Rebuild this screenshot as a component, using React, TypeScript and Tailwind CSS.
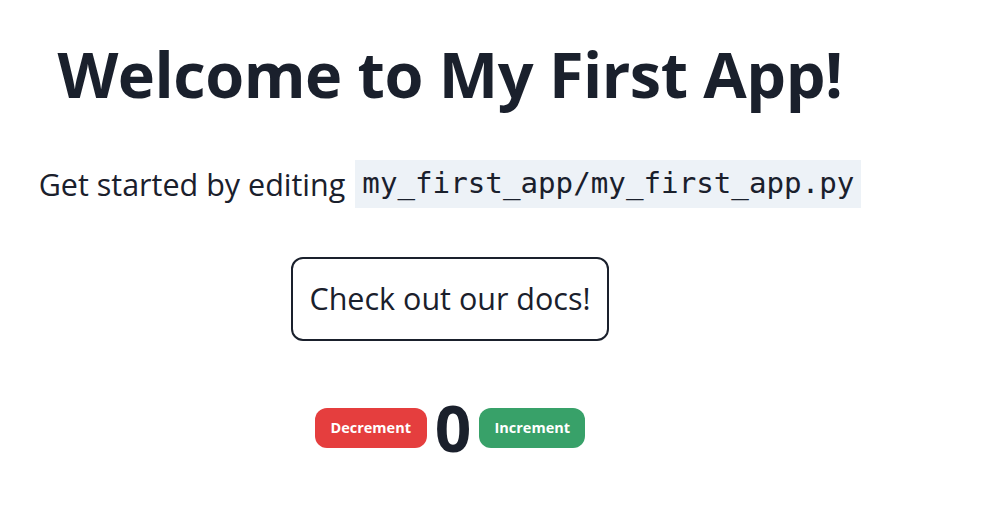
export default function App() {
  return (
    <div className="w-[900px] flex flex-col items-center text-[#1a202c] font-['Open_Sans',sans-serif]">
      <h1 className="mt-[35px] h-[76px] flex items-center text-[63px] font-bold leading-none tracking-[-0.5px]">
        Welcome to My First App!
      </h1>
      <p className="mt-[49px] flex items-center text-[30.5px] leading-none">
        <span>Get started by editing</span>
        <code className="ml-[10px] px-[7px] h-[48px] flex items-center bg-[#edf2f7] font-['DejaVu_Sans_Mono',monospace] text-[29.2px]">
          my_first_app/my_first_app.py
        </code>
      </p>
      <a className="mt-[49px] w-[318px] h-[84px] flex items-center justify-center border-2 border-[#1a202c] rounded-[12px] text-[30.5px]">
        Check out our docs!
      </a>
      <div className="mt-[55px] flex items-center gap-[8px]">
        <button className="w-[112px] h-[40px] rounded-[12px] bg-[#e53e3e] text-white text-[14.5px] font-bold">
          Decrement
        </button>
        <span className="text-[64px] font-bold leading-none">0</span>
        <button className="w-[106px] h-[40px] rounded-[12px] bg-[#38a169] text-white text-[14.5px] font-bold">
          Increment
        </button>
      </div>
    </div>
  )
}
